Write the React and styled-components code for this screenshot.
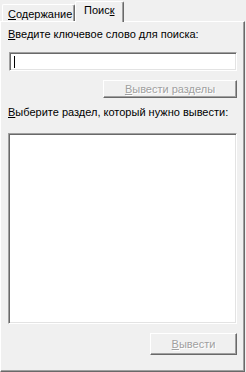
import React from 'react';
import styled, { createGlobalStyle } from 'styled-components';

const GlobalStyle = createGlobalStyle`
  html, body {
    margin: 0;
    padding: 0;
    background: #f0f0f0;
  }
  body {
    font-family: 'Liberation Sans', Arial, sans-serif;
    font-size: 11px;
    color: #000;
  }
`;

const Window = styled.div`
  width: 246px;
  height: 372px;
  display: flex;
  flex-direction: column;
  background: #f0f0f0;
  overflow: hidden;
`;

const TabStrip = styled.div`
  height: 21px;
  display: flex;
  align-items: flex-start;
  padding-left: 2px;
  position: relative;
  z-index: 1;
`;

const Tab = styled.div`
  box-sizing: border-box;
  margin-top: ${p => (p.active ? '1px' : '4px')};
  height: ${p => (p.active ? '21px' : '17px')};
  padding: ${p => (p.active ? '2px 0 0 8px' : '3px 0 0 5px')};
  width: ${p => p.w}px;
  background: #f0f0f0;
  border-top: 1px solid #fff;
  border-left: 1px solid #fff;
  border-right: 1px solid #696969;
  box-shadow: inset -1px 0 0 #a0a0a0;
  border-radius: 2px 2px 0 0;
  line-height: 13px;
  white-space: nowrap;
`;

const Key = styled.span`
  text-decoration: underline;
`;

const Panel = styled.div`
  box-sizing: border-box;
  width: 245px;
  flex: 1;
  border-top: 1px solid #fff;
  border-left: 1px solid #fff;
  border-right: 1px solid #696969;
  border-bottom: 1px solid #696969;
  box-shadow: inset -1px -1px 0 #a0a0a0;
  padding: 5px 0 0 7px;
  display: flex;
  flex-direction: column;
`;

const Label = styled.div`
  line-height: 13px;
  height: 13px;
  margin-top: ${p => p.mt}px;
  white-space: nowrap;
`;

const Edit = styled.div`
  box-sizing: border-box;
  margin: 11px 0 0 1px;
  width: 228px;
  height: 19px;
  background: #fff;
  border-top: 1px solid #a0a0a0;
  border-left: 1px solid #a0a0a0;
  border-right: 1px solid #fff;
  border-bottom: 1px solid #fff;
  box-shadow: inset 1px 1px 0 #696969, inset -1px -1px 0 #e3e3e3;
  padding: 3px 0 0 4px;
`;

const Caret = styled.div`
  width: 1px;
  height: 12px;
  background: #000;
`;

const Button = styled.div`
  box-sizing: border-box;
  align-self: flex-start;
  margin: ${p => p.mt}px 0 0 ${p => p.ml}px;
  width: ${p => p.w}px;
  height: ${p => p.h}px;
  display: flex;
  align-items: center;
  justify-content: center;
  background: #f0f0f0;
  border-top: 1px solid #fff;
  border-left: 1px solid #fff;
  border-right: 1px solid #696969;
  border-bottom: 1px solid #696969;
  box-shadow: inset -1px -1px 0 #a0a0a0;
  color: #a0a0a0;
  text-shadow: 1px 1px 0 #fff;
  white-space: nowrap;
`;

const ListBox = styled.div`
  box-sizing: border-box;
  margin-top: 14px;
  width: 229px;
  height: 191px;
  background: #fff;
  border-top: 1px solid #a0a0a0;
  border-left: 1px solid #a0a0a0;
  border-right: 1px solid #fff;
  border-bottom: 1px solid #fff;
  box-shadow: inset 1px 1px 0 #696969, inset -1px -1px 0 #e3e3e3;
`;

export default function App() {
  return (
    <>
      <GlobalStyle />
      <Window>
        <TabStrip>
          <Tab w={73}>
            <Key>С</Key>одержание
          </Tab>
          <Tab active w={49}>
            Поис<Key>к</Key>
          </Tab>
        </TabStrip>
        <Panel>
          <Label mt={1}>
            <Key>В</Key>ведите ключевое слово для поиска:
          </Label>
          <Edit>
            <Caret />
          </Edit>
          <Button mt={9} ml={95} w={134} h={18}>
            <span>
              <Key>В</Key>ывести разделы
            </span>
          </Button>
          <Label mt={8}>
            <Key>В</Key>ыберите раздел, который нужно вывести:
          </Label>
          <ListBox />
          <Button mt={9} ml={142} w={87} h={22}>
            <span>
              <Key>В</Key>ывести
            </span>
          </Button>
        </Panel>
      </Window>
    </>
  );
}
